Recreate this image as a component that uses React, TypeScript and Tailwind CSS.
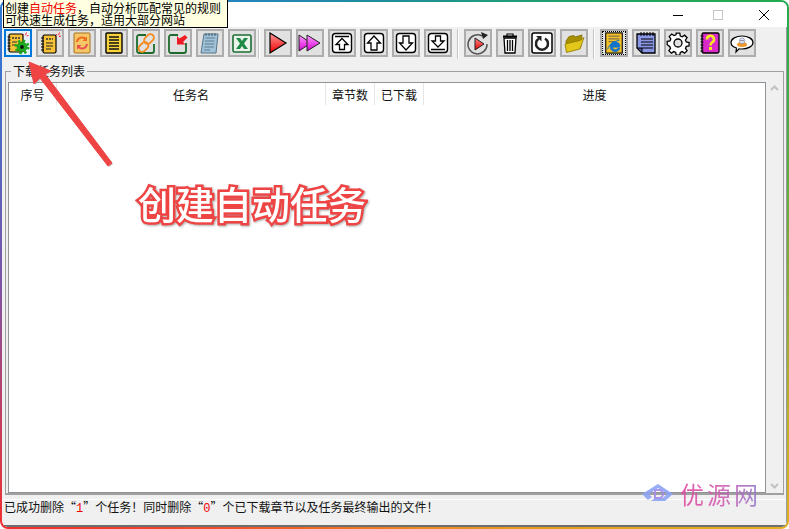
import React from "react";

const Btn = ({ children, active, focus }: { children: React.ReactNode; active?: boolean; focus?: boolean }) => (
  <div
    className={
      active
        ? "w-7 h-7 flex items-center justify-center border-2 border-[#0078d7] bg-[#e5f1fb]"
        : "w-7 h-7 flex items-center justify-center border-2 border-[#adadad] bg-[#e1e1e1]"
    }
  >
    {focus ? (
      <div className="w-6 h-6 border border-dotted border-black flex items-center justify-center shrink-0">{children}</div>
    ) : (
      children
    )}
  </div>
);

const Sep = ({ ml, mr }: { ml: string; mr: string }) => <div className={`w-[2px] h-[30px] bg-[#c4c4c4] border-r border-white ${ml} ${mr}`} />;

const Ico = ({ children, s = 24 }: { children: React.ReactNode; s?: number }) => (
  <svg width={s} height={s} viewBox="0 0 24 24" className="shrink-0">
    {children}
  </svg>
);

const Spiral = () => <path d="M1.500 6h3M1.500 9h3M1.500 12h3M1.500 15h3M1.500 18h3" stroke="#000" strokeWidth="1.200" fill="none" />;

const Sparkle = () => <path d="M18 3l1 1.500M21.500 1.500l-1 2.500M23 5l-2 .5" stroke="#f22" strokeWidth="1" fill="none" />;

const IconAuto = () => (
  <Ico>
    <rect x="3" y="3" width="14" height="18" rx="1.500" fill="#f7c238" stroke="#000" strokeWidth="1.200" />
    <Spiral />
    <path d="M6 7h8" stroke="#333" strokeWidth="1.600" strokeDasharray="2 1" />
    <path d="M6 11h5M6 14h4" stroke="#333" strokeWidth="1" />
    <path d="M17 3l1 1.500M20.500 1.500l-1 2.500M22.500 4.500l-2 .5" stroke="#f22" strokeWidth="1" fill="none" />
    <circle cx="16" cy="16" r="6.200" fill="none" stroke="#1fae1f" strokeWidth="2.600" strokeDasharray="2.400 2.470" />
    <circle cx="16" cy="16" r="5" fill="#1fae1f" stroke="#0d6d0d" strokeWidth=".5" />
    <circle cx="16" cy="16" r="1.900" fill="#111" />
  </Ico>
);

const IconManual = () => (
  <Ico>
    <rect x="5" y="4" width="13" height="18" rx="1.500" fill="#f7c238" stroke="#000" strokeWidth="1.200" />
    <path d="M3 7h3M3 10h3M3 13h3M3 16h3M3 19h3" stroke="#000" strokeWidth="1.200" fill="none" />
    <path d="M8 8h7" stroke="#333" strokeWidth="1.600" strokeDasharray="2 1" />
    <path d="M8 12h7M8 15h7M8 18h5" stroke="#222" strokeWidth="1" />
    <Sparkle />
  </Ico>
);

const IconRefreshDoc = () => (
  <Ico>
    <rect x="4" y="2" width="16" height="20" rx="1" fill="#f6c768" stroke="#a7701c" strokeWidth="1" />
    <path d="M7 11a5 5 0 0 1 9-2.500" stroke="#ee6a1f" strokeWidth="2" fill="none" />
    <path d="M17 5.500v4.500h-4.500z" fill="#ee6a1f" />
    <path d="M17 13a5 5 0 0 1-9 2.500" stroke="#e94f4f" strokeWidth="2" fill="none" />
    <path d="M7 18.500V14h4.500z" fill="#e94f4f" />
  </Ico>
);

const IconList = () => (
  <Ico>
    <rect x="4" y="2" width="16" height="20" rx="1" fill="#f9d33c" stroke="#000" strokeWidth="1.400" />
    <path d="M7 6h10M7 9h10M7 12h10M7 15h10M7 18h10" stroke="#111" strokeWidth="1.300" />
  </Ico>
);

const IconLink = () => (
  <Ico>
    <path d="M20 13v7a2 2 0 0 1-2 2H5a2 2 0 0 1-2-2V6a2 2 0 0 1 2-2h7" fill="none" stroke="#1c6b2c" strokeWidth="1.800" />
    <rect x="11.500" y="2.500" width="7" height="11" rx="3.500" transform="rotate(45 15 8)" fill="none" stroke="#f58a1f" strokeWidth="1.800" />
    <rect x="6" y="10.500" width="7" height="11" rx="3.500" transform="rotate(45 9.500 16)" fill="none" stroke="#f58a1f" strokeWidth="1.800" />
  </Ico>
);

const IconImport = () => (
  <Ico>
    <path d="M20 12v8a2 2 0 0 1-2 2H5a2 2 0 0 1-2-2V6a2 2 0 0 1 2-2h7" fill="none" stroke="#1c6b2c" strokeWidth="1.800" />
    <path d="M19 4l2.500 2.500-4.500 4.500 2.500 2.500h-8.500V5l2.500 2.500z" fill="#ee1c25" />
  </Ico>
);

const IconPad = () => (
  <Ico>
    <path d="M6 3h14l-2 19H3z" fill="#a0c3da" stroke="#557487" strokeWidth="1" />
    <path d="M7.500 7h9.500M7 10h9.500M6.700 13h9.500M6.300 16h9.500M6 19h6" stroke="#5f7c90" strokeWidth="1" />
    <path d="M8 2v3M11 2v3M14 2v3M17 2v3" stroke="#46606f" strokeWidth="1" />
  </Ico>
);

const IconExcel = () => (
  <Ico>
    <rect x="3" y="4" width="18" height="17" rx="1.500" fill="#e9f3ea" stroke="#1b6d33" strokeWidth="1.600" />
    <path d="M6 7h4l2 3 2-3h4l-4 5.500 4 5.500h-4l-2-3-2 3H6l4-5.500z" fill="#1e8a45" />
  </Ico>
);

const Grad = ({ id, a, b }: { id: string; a: string; b: string }) => (
  <linearGradient id={id} x1="0" y1="0" x2="0" y2="1">
    <stop offset="0" stopColor={a} />
    <stop offset="1" stopColor={b} />
  </linearGradient>
);

const IconPlay = () => (
  <Ico>
    <defs>
      <Grad id="redg" a="#ff9a9a" b="#ee0000" />
    </defs>
    <path d="M4 2l16 10L4 22z" fill="url(#redg)" stroke="#000" strokeWidth="1.200" />
  </Ico>
);

const IconPlayAll = () => (
  <Ico>
    <defs>
      <Grad id="mag" a="#ff9cff" b="#d800d8" />
    </defs>
    <path d="M1 4l12 8-12 8z" fill="url(#mag)" stroke="#222" strokeWidth="1" />
    <path d="M9 4l13 8-13 8z" fill="url(#mag)" stroke="#222" strokeWidth="1" />
  </Ico>
);

const Frame = ({ children }: { children: React.ReactNode }) => (
  <Ico>
    <rect x="2.500" y="2.500" width="19" height="19" rx="3" fill="#fff" stroke="#000" strokeWidth="1.400" />
    {children}
  </Ico>
);

const IconTop = () => (
  <Frame>
    <path d="M5 5.500h14" stroke="#000" strokeWidth="1.400" />
    <path d="M12 7.500l6 6h-3.500v5h-5v-5H6z" fill="#fff" stroke="#000" strokeWidth="1.300" />
  </Frame>
);

const IconUp = () => (
  <Frame>
    <path d="M12 5l6.500 7H15v7H9v-7H5.500z" fill="#fff" stroke="#000" strokeWidth="1.300" />
  </Frame>
);

const IconDown = () => (
  <Frame>
    <path d="M12 19l6.500-7H15V5H9v7H5.500z" fill="#fff" stroke="#000" strokeWidth="1.300" />
  </Frame>
);

const IconBottom = () => (
  <Frame>
    <path d="M9.500 5h5v5H18l-6 6-6-6h3.500z" fill="#fff" stroke="#000" strokeWidth="1.300" />
    <path d="M5 18.500h14" stroke="#000" strokeWidth="1.400" />
  </Frame>
);

const IconReplay = () => (
  <Ico>
    <defs>
      <Grad id="redp" a="#ff8d8d" b="#e60000" />
    </defs>
    <path d="M16 5a9.500 9.500 0 1 0 5 8" fill="none" stroke="#555" strokeWidth="1.500" />
    <path d="M15 1l7 3-5 4z" fill="#222" />
    <path d="M9 7l9 6-9 6z" fill="url(#redp)" stroke="#222" strokeWidth="1" />
  </Ico>
);

const IconTrash = () => (
  <Ico>
    <path d="M5 5.500h14" stroke="#000" strokeWidth="2.200" />
    <path d="M9 5V3h6v2" fill="none" stroke="#000" strokeWidth="1.200" />
    <path d="M6 7h12l-1 15H7z" fill="#fff" stroke="#000" strokeWidth="1.300" />
    <path d="M9.500 9v11M12 9v11M14.500 9v11" stroke="#000" strokeWidth="1.300" />
  </Ico>
);

const IconReload = () => (
  <Ico>
    <rect x="2" y="2" width="20" height="20" rx="2" fill="#fff" stroke="#000" strokeWidth="1.500" />
    <path d="M9 7.500a6 6 0 1 0 6 0" fill="none" stroke="#222" strokeWidth="2.500" />
    <path d="M6 5h5.500v5.500z" fill="#222" />
  </Ico>
);

const IconFolder = () => (
  <Ico>
    <path d="M4 10l2-3 1-1.500 5-1 1 1.500 7-2-1.500 13-14 3z" fill="#a88f00" stroke="#7d6c00" strokeWidth=".8" />
    <path d="M3 13l15-3.500 4-3-4 11.500-13.500 3.500z" fill="#e3c61a" stroke="#8c7800" strokeWidth=".8" />
  </Ico>
);

const IconIe = () => (
  <Ico s={22}>
    <rect x="3" y="1" width="18" height="22" fill="#f7c329" stroke="#000" strokeWidth="1.200" />
    <path d="M6 4.500h12M6 7.500h12M6 10.500h6" stroke="#555" strokeWidth="1" />
    <path d="M18 16.500H10a3.500 3.500 0 0 0 6.500 1h2a5.500 5.500 0 1 1 0-3z" fill="#1273cc" stroke="#1273cc" strokeWidth=".8" />
    <path d="M5 19c1-5 6-9 13-10" fill="none" stroke="#1273cc" strokeWidth="1" />
  </Ico>
);

const IconNote = () => (
  <Ico>
    <path d="M8 3h13v19H8l-5-5V3z" fill="#8a97e6" stroke="#000" strokeWidth="1.300" />
    <path d="M7 8h12M7 11h12M7 14h12M8 17h11" stroke="#000" strokeWidth="1.200" />
    <path d="M7 1v4M10 1v4M13 1v4M16 1v4M19 1v4" stroke="#000" strokeWidth="1" />
    <path d="M8 22v-5H3z" fill="#4a559d" stroke="#000" strokeWidth="1" />
  </Ico>
);

const IconGear = () => (
  <Ico>
    <path
      d="M10.200 2h3.600l.5 2.800 2 .8 2.300-1.600 2.500 2.500-1.600 2.300.8 2 2.800.5v3.400l-2.800.5-.8 2 1.600 2.300-2.500 2.500-2.300-1.600-2 .8-.5 2.800h-3.600l-.5-2.800-2-.8-2.300 1.600-2.500-2.500 1.600-2.300-.8-2L1.200 13.500V10.100l2.800-.5.8-2-1.600-2.300 2.500-2.500 2.300 1.600 2-.8z"
      fill="#fff"
      stroke="#000"
      strokeWidth="1.300"
      transform="translate(0 .2)"
    />
    <circle cx="12" cy="12" r="4" fill="#e1e1e1" stroke="#000" strokeWidth="1.300" />
  </Ico>
);

const IconHelp = () => (
  <Ico>
    <rect x="4" y="2" width="17" height="20" rx="1.500" fill="#d92bc9" stroke="#000" strokeWidth="1.300" />
    <path d="M2.500 5h3M2.500 8h3M2.500 11h3M2.500 14h3M2.500 17h3M2.500 20h3" stroke="#000" strokeWidth="1" />
    <path d="M9 8.500a3.500 3.500 0 1 1 5 3c-1.300.8-1.500 1.500-1.500 3" fill="none" stroke="#f7ea1d" strokeWidth="2.600" />
    <rect x="11" y="16" width="3" height="3" fill="#f7ea1d" />
  </Ico>
);

const IconChat = () => (
  <Ico>
    <path d="M12 5c6 0 11 2.800 11 6.500S18 18 12 18c-1 0-2 0-3-.2L6 21l.5-4C3 16 1 14 1 11.500 1 7.800 6 5 12 5z" fill="#fff" stroke="#000" strokeWidth="1.200" />
    <ellipse cx="12" cy="13.500" rx="5" ry="2.500" fill="#f09a2c" />
    <circle cx="12" cy="9.800" r="2.800" fill="#dfe3f4" stroke="#7a7fb4" strokeWidth=".6" />
    <circle cx="11" cy="9.500" r=".6" fill="#333" />
    <circle cx="13" cy="9.500" r=".6" fill="#333" />
  </Ico>
);

const Th = ({ children, line = true }: { children: React.ReactNode; line?: boolean }) => (
  <div className={line ? "flex items-center justify-center border-r border-[#e5e5e5] pt-px" : "flex items-center justify-center pt-px"}>{children}</div>
);

export default function App() {
  return (
    <div className="relative w-[789px] h-[529px] bg-white overflow-hidden font-['Noto_Sans_CJK_SC','Liberation_Sans',sans-serif] text-[12px] text-black">
      {/* window frame, rainbow accent border */}
      <div className="w-full h-full rounded-[8px] p-[2px] bg-[conic-gradient(from_0deg,#1f8f9a_0deg,#22ac4f_56deg,#e0b020_124deg,#ee8a20_175deg,#f03030_236deg,#7a55a8_268deg,#2b7bd8_304deg,#1f8f9a_360deg)]">
        <div className="w-full h-full rounded-[6px] bg-[#f0f0f0] flex flex-col overflow-hidden">
          {/* title bar */}
          <div className="h-[25px] bg-white flex items-center justify-end shrink-0">
            <svg width="10" height="10" viewBox="0 0 10 10" className="mr-[30px]">
              <path d="M0 5.500h10" stroke="#000" strokeWidth="1" />
            </svg>
            <svg width="10" height="10" viewBox="0 0 10 10" className="mr-[36px]">
              <rect x=".5" y=".5" width="9" height="9" fill="none" stroke="#c6c6c6" />
            </svg>
            <svg width="10" height="10" viewBox="0 0 10 10" className="mr-[18px]">
              <path d="M0 0l10 10M10 0L0 10" stroke="#000" strokeWidth="1" />
            </svg>
          </div>

          <div className="flex-1 flex flex-col min-h-0 border-r border-b-2 border-r-[#9a9a9a] border-b-[#6e6e6e]">
            {/* toolbar */}
            <div className="h-[32px] pl-[2px] pt-[2px] flex items-start gap-1 shrink-0">
              <Btn active><IconAuto /></Btn>
              <Btn><IconManual /></Btn>
              <Btn><IconRefreshDoc /></Btn>
              <Btn><IconList /></Btn>
              <Btn><IconLink /></Btn>
              <Btn><IconImport /></Btn>
              <Btn><IconPad /></Btn>
              <Btn><IconExcel /></Btn>
              <Sep ml="ml-[-2px]" mr="mr-0" />
              <Btn><IconPlay /></Btn>
              <Btn><IconPlayAll /></Btn>
              <Btn><IconTop /></Btn>
              <Btn><IconUp /></Btn>
              <Btn><IconDown /></Btn>
              <Btn><IconBottom /></Btn>
              <Sep ml="ml-px" mr="mr-px" />
              <Btn><IconReplay /></Btn>
              <Btn><IconTrash /></Btn>
              <Btn><IconReload /></Btn>
              <Btn><IconFolder /></Btn>
              <Sep ml="ml-px" mr="mr-px" />
              <Btn focus><IconIe /></Btn>
              <Btn><IconNote /></Btn>
              <Btn><IconGear /></Btn>
              <Btn><IconHelp /></Btn>
              <Btn><IconChat /></Btn>
            </div>

            {/* group box */}
            <div className="relative ml-[3px] mr-[2px] mt-[12px] h-[424px] border border-[#a0a0a0] border-b-2 pl-[2px] pt-[10px] flex flex-col shrink-0">
              <div className="absolute left-[5px] top-[-9px] px-[2px] bg-[#f0f0f0] leading-[16px] text-[#111]">下载任务列表</div>
              <div className="flex flex-1 min-h-0">
                <div className="w-[758px] border border-[#8f9499] bg-white">
                  <div className="grid grid-cols-[48px_269px_49px_49px_1fr] h-[22px] text-[#111]">
                    <Th>序号</Th>
                    <Th>任务名</Th>
                    <Th>章节数</Th>
                    <Th>已下载</Th>
                    <Th line={false}>进度</Th>
                  </div>
                </div>
                <div className="flex-1 flex flex-col justify-between items-center py-[3px] text-[#c2c2c2]">
                  <svg width="9" height="6" viewBox="0 0 9 6">
                    <path d="M1 5l3.500-3.500L8 5" fill="none" stroke="currentColor" strokeWidth="2" />
                  </svg>
                  <svg width="9" height="6" viewBox="0 0 9 6" className="mb-[1px]">
                    <path d="M1 1l3.500 3.500L8 1" fill="none" stroke="currentColor" strokeWidth="2" />
                  </svg>
                </div>
              </div>
            </div>

            {/* status bar */}
            <div className="mt-[4px] flex-1 border-t border-white pl-[2px] leading-[14px] text-[#111]">
              已成功删除“<span className="text-[#f00000] font-['Liberation_Mono',monospace] text-[12px]">1</span>”个任务！同时删除“
              <span className="text-[#f00000] font-['Liberation_Mono',monospace] text-[12px]">0</span>”个已下载章节以及任务最终输出的文件！
            </div>
          </div>
        </div>
      </div>

      {/* tooltip over the toolbar */}
      <div className="absolute left-[3px] top-0 w-[225px] h-[28px] bg-[#ffffe1] border border-black border-t-0 pl-[1px] leading-[12px] whitespace-nowrap pt-[2px]">
        <div>
          创建<span className="text-[#f00000]">自动任务</span>，自动分析匹配常见的规则
        </div>
        <div>可快速生成任务，适用大部分网站</div>
      </div>

      {/* annotation arrow */}
      <svg width="130" height="120" viewBox="0 0 130 120" className="absolute left-0 top-[55px] pointer-events-none">
        <path d="M29 7l5 22 6-6 68 88 4-3-67-89 6-3z" fill="#999" opacity=".6" transform="translate(1 1)" />
        <path d="M29 7l5 22 6-6 68 88 4-3-67-89 6-3z" fill="#ef4444" stroke="#ef4444" strokeWidth="1" strokeLinejoin="round" />
      </svg>

      {/* annotation text */}
      <div className="absolute left-[138px] top-[179px] text-[38px] leading-[48px] whitespace-nowrap font-medium text-white [-webkit-text-stroke:5px_#ef4444] [paint-order:stroke_fill] drop-shadow-[1px_1px_1px_#aaa]">
        创建自动任务
      </div>

      {/* watermark */}
      <div className="absolute left-[642px] top-[483px] flex items-center gap-[6px] opacity-90 pointer-events-none">
        <svg width="32" height="24" viewBox="0 0 32 24">
          <path d="M16 1l15 10-8 7H9l4-3h8l4-4-9-6-9 6 3 3-4 3-6-6z" fill="#8da4f4" />
          <path d="M13 7h4a4 4 0 0 1 0 8h-4z" fill="none" stroke="#a08bee" strokeWidth="2" />
        </svg>
        <div className="mt-[-3px] text-[24px] leading-[26px] tracking-[3px] font-normal text-transparent bg-clip-text bg-gradient-to-r from-[#e0489f] via-[#d35ab0] to-[#8d7ccf]">
          优源网
        </div>
      </div>
    </div>
  );
}
